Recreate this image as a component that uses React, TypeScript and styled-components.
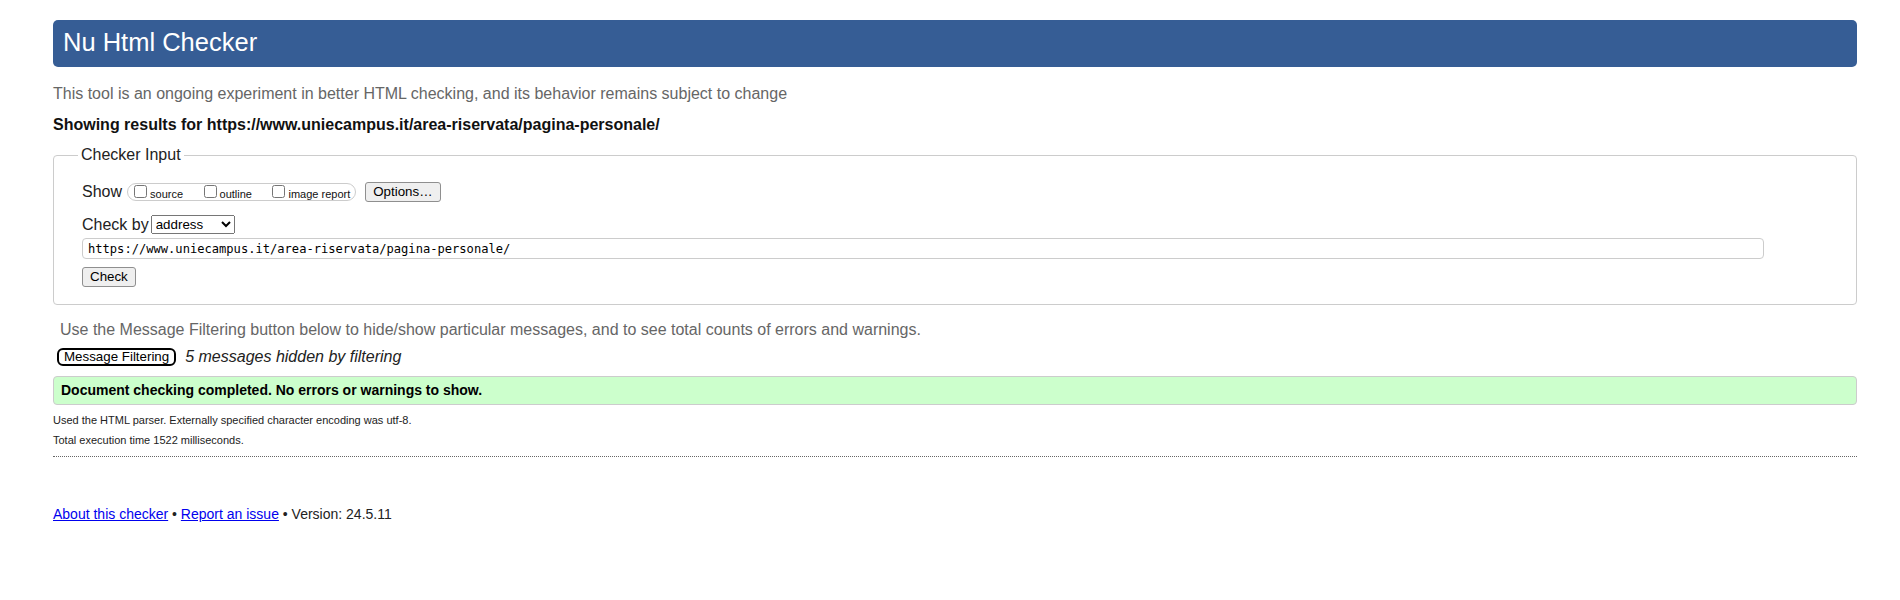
import React from "react";
import styled, { createGlobalStyle } from "styled-components";

const GlobalStyle = createGlobalStyle`
  html, body { margin: 0; padding: 0; background: #fff; }
  body {
    font-family: "Liberation Sans", Arial, Helvetica, sans-serif;
    color: #000;
  }
`;

const Page = styled.main`
  display: flex;
  flex-direction: column;
  padding: 20px 43px 40px 53px;
`;

const Title = styled.h1`
  margin: 0;
  height: 47px;
  box-sizing: border-box;
  display: flex;
  align-items: center;
  padding: 0 0 2px 10px;
  background: #365d95;
  color: #fff;
  border-radius: 5px;
  font-size: 25.5px;
  font-weight: normal;
  line-height: 1;
`;

const Tagline = styled.p`
  margin: 18px 0 0;
  font-size: 16px;
  line-height: 18px;
  color: #666;
`;

const ResultsFor = styled.p`
  margin: 13px 0 0;
  font-size: 16px;
  line-height: 18px;
  font-weight: bold;
  color: #111;
`;

const InputFieldset = styled.fieldset`
  margin: 12px 0 0;
  padding: 0 28px 17px;
  border: 1px solid #ccc;
  border-radius: 4px;
  min-inline-size: 0;
`;

const Legend = styled.legend`
  font-size: 16px;
  line-height: 18px;
  padding: 0 3px;
  margin-left: -4px;
  color: #222;
`;

const Stack = styled.div`
  display: flex;
  flex-direction: column;
  align-items: flex-start;
`;

const ShowRow = styled.div`
  display: flex;
  align-items: center;
  height: 20px;
  margin-top: 18px;
`;

const RowLabel = styled.span<{ $gap: number }>`
  font-size: 16px;
  line-height: 18px;
  color: #222;
  margin-right: ${(p) => p.$gap}px;
`;

const Pill = styled.span`
  display: inline-flex;
  align-items: center;
  gap: 16.5px;
  height: 18px;
  box-sizing: border-box;
  border: 1px solid #ccc;
  border-radius: 9px;
  padding: 0 5px 0 2px;
`;

const OptionLabel = styled.label`
  display: inline-flex;
  align-items: flex-end;
  font-size: 11px;
  line-height: 12px;
  color: #111;
`;

const OptionBox = styled.input.attrs({ type: "checkbox" })`
  width: 13px;
  height: 13px;
  margin: 0 3px 2px 4px;
`;

const GrayButton = styled.button<{ $ml?: number; $mt?: number }>`
  height: 20px;
  box-sizing: border-box;
  margin: ${(p) => p.$mt ?? 0}px 0 0 ${(p) => p.$ml ?? 0}px;
  padding: 0 7px;
  background: #efefef;
  border: 1px solid #8f8f8f;
  border-radius: 3px;
  font-family: "Liberation Sans", Arial, sans-serif;
  font-size: 13.33px;
  line-height: 16px;
  color: #000;
`;

const CheckByRow = styled.div`
  display: flex;
  align-items: center;
  height: 19px;
  margin-top: 13px;
`;

const ModeSelect = styled.select`
  width: 84px;
  height: 19px;
  box-sizing: border-box;
  margin: 0 0 0 2px;
  font-family: "Liberation Sans", Arial, sans-serif;
  font-size: 13.33px;
  color: #000;
`;

const UrlInput = styled.input`
  margin-top: 4px;
  width: calc(100% - 64px);
  height: 21px;
  box-sizing: border-box;
  padding: 0 5px;
  border: 1px solid #ccc;
  border-radius: 4px;
  font-family: "DejaVu Sans Mono", "Liberation Mono", monospace;
  font-size: 12.1px;
  color: #000;
`;

const FilterHint = styled.p`
  margin: 16px 0 0;
  padding-left: 7px;
  font-size: 16px;
  line-height: 18px;
  color: #666;
`;

const FilterRow = styled.div`
  display: flex;
  align-items: center;
  gap: 9px;
  margin-top: 9px;
  padding-left: 4px;
`;

const FilterButton = styled.button`
  height: 18.4px;
  box-sizing: border-box;
  padding: 0 5px;
  background: #fff;
  border: 2px solid #000;
  border-radius: 6px;
  font-family: "Liberation Sans", Arial, sans-serif;
  font-size: 13.33px;
  line-height: 14px;
  color: #000;
`;

const HiddenCount = styled.span`
  font-size: 16px;
  line-height: 18px;
  font-style: italic;
  color: #222;
`;

const SuccessBox = styled.p`
  margin: 10px 0 0;
  padding: 5px 7px;
  border: 1px solid #ccc;
  border-radius: 4px;
  background: #ccffcc;
  font-size: 14px;
  line-height: 17px;
  font-weight: bold;
  color: #000;
`;

const Detail = styled.p<{ $mt: number }>`
  margin: ${(p) => p.$mt}px 0 0;
  font-size: 11px;
  line-height: 13px;
  color: #222;
`;

const Rule = styled.div`
  margin-top: 9px;
  border-top: 1px dotted #666;
`;

const Footer = styled.p`
  margin: 49px 0 0;
  font-size: 14px;
  line-height: 16px;
  color: #222;
`;

const FooterLink = styled.a`
  color: #0000ee;
  text-decoration: underline;
`;

export default function App() {
  const url = "https://www.uniecampus.it/area-riservata/pagina-personale/";
  return (
    <>
      <GlobalStyle />
      <Page>
        <Title>Nu Html Checker</Title>
        <Tagline>
          This tool is an ongoing experiment in better HTML checking, and its behavior remains subject to change
        </Tagline>
        <ResultsFor>Showing results for {url}</ResultsFor>

        <InputFieldset>
          <Legend>Checker Input</Legend>
          <Stack>
            <ShowRow>
              <RowLabel $gap={5}>Show</RowLabel>
              <Pill>
                <OptionLabel>
                  <OptionBox />
                  source
                </OptionLabel>
                <OptionLabel>
                  <OptionBox />
                  outline
                </OptionLabel>
                <OptionLabel>
                  <OptionBox />
                  image report
                </OptionLabel>
              </Pill>
              <GrayButton type="button" $ml={9}>
                Options…
              </GrayButton>
            </ShowRow>
            <CheckByRow>
              <RowLabel $gap={0}>Check by</RowLabel>
              <ModeSelect defaultValue="address">
                <option value="address">address</option>
                <option value="file">file upload</option>
                <option value="text">text input</option>
              </ModeSelect>
            </CheckByRow>
            <UrlInput type="url" defaultValue={url} />
            <GrayButton type="button" $mt={8}>
              Check
            </GrayButton>
          </Stack>
        </InputFieldset>

        <FilterHint>
          Use the Message Filtering button below to hide/show particular messages, and to see total counts of errors and warnings.
        </FilterHint>
        <FilterRow>
          <FilterButton type="button">Message Filtering</FilterButton>
          <HiddenCount>5 messages hidden by filtering</HiddenCount>
        </FilterRow>

        <SuccessBox>Document checking completed. No errors or warnings to show.</SuccessBox>
        <Detail $mt={9}>Used the HTML parser. Externally specified character encoding was utf-8.</Detail>
        <Detail $mt={7}>Total execution time 1522 milliseconds.</Detail>
        <Rule />

        <Footer>
          <FooterLink href="#about">About this checker</FooterLink> •{" "}
          <FooterLink href="#issue">Report an issue</FooterLink> • Version: 24.5.11
        </Footer>
      </Page>
    </>
  );
}
